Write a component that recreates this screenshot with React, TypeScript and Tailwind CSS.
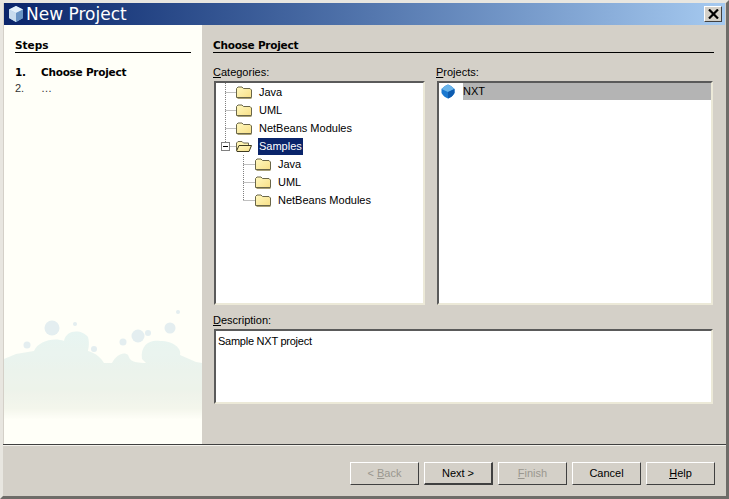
const font = { fontFamily: '"Liberation Sans", sans-serif' };
const boldFont = { fontFamily: '"DejaVu Sans", sans-serif' };

function Folder({ open = false }: { open?: boolean }) {
  return (
    <svg width="16" height="14" viewBox="0 0 16 14" className="shrink-0">
      <defs>
        <linearGradient id="fg" x1="0" y1="0" x2="1" y2="1">
          <stop offset="0" stopColor="#fff8c0" />
          <stop offset="1" stopColor="#f8e088" />
        </linearGradient>
      </defs>
      {open ? (
        <>
          <path d="M0.5 11 V4 L2 2.5 H6 L7.5 4 H12.5 V6" fill="#fff4b0" stroke="#6e6a50" />
          <path d="M0.5 12 L3 6.5 H15.5 L13 12.5 H1 Z" fill="url(#fg)" stroke="#3e3a20" />
        </>
      ) : (
        <>
          <path d="M0.5 12.5 V3.5 L2 2 H6 L7.5 3.5 H14 L15.5 5 V12.5 Z" fill="url(#fg)" stroke="#6a6648" />
          <path d="M1.5 13.5 H15.5" fill="none" stroke="#a8a078" />
        </>
      )}
    </svg>
  );
}

function Connector({ kind, width }: { kind: "mid" | "exp" | "child" | "childLast"; width: number }) {
  const x = 5.5;
  return (
    <svg width={width} height="18" className="shrink-0">
      <g stroke="#808080" strokeDasharray="1 1" fill="none">
        {kind === "mid" && <path d={`M${x} 0 V18`} />}
        {kind === "exp" && <path d={`M${x} 0 V5`} />}
        {kind === "childLast" ? <path d={`M${x} 0 V9`} /> : kind === "child" ? <path d={`M${x} 0 V18`} /> : null}
        <path d={`M${x} 9.5 H${width}`} />
      </g>
      {kind === "exp" && (
        <g>
          <rect x="1.5" y="5.5" width="8" height="8" fill="#fff" stroke="#808080" />
          <path d="M3 9.5 H8" stroke="#000" />
        </g>
      )}
    </svg>
  );
}

function Row({ kind, label, indent, open, selected }: { kind: "mid" | "exp" | "child" | "childLast"; label: string; indent?: boolean; open?: boolean; selected?: boolean }) {
  return (
    <div className={`flex items-center h-[18px] ${indent ? "pl-[22px]" : "pl-[4px]"}`}>
      <Connector kind={kind} width={indent ? 17 : 16} />
      <Folder open={open} />
      <span className={`ml-[6px] px-[1px] h-[17px] leading-[16px] whitespace-nowrap ${selected ? "bg-[#0a246a] text-white" : ""}`}>{label}</span>
    </div>
  );
}

function Btn({ label, u, rest, pre, disabled, def }: { label?: string; u?: string; rest?: string; pre?: string; disabled?: boolean; def?: boolean }) {
  return (
    <div
      className={`w-[69px] h-[23px] flex items-center justify-center border-t border-l border-t-white border-l-white border-r border-b ${def ? "border-t-[#404040] border-l-[#404040] border-r-2 border-b-2 border-r-[#404040] border-b-[#404040]" : "border-r-[#404040] border-b-[#404040]"} ${disabled ? "text-[#9a978f]" : "text-black"}`}
    >
      <span>
        {pre}
        {u && <span className="underline">{u}</span>}
        {rest}
        {label}
      </span>
    </div>
  );
}

const sunken = "bg-white border-2 border-t-[#5a5a5a] border-l-[#5a5a5a] border-r-[#ece9d8] border-b-[#ece9d8]";

export default function App() {
  return (
    <div style={font} className="w-[729px] h-[499px] bg-[#d4d0c8] text-[11px] text-black flex flex-col border-t-[3px] border-l-[3px] border-r-[3px] border-b-[3px] border-t-[#e8e6e0] border-l-[#e8e6e0] border-r-[#6e6c68] border-b-[#6e6c68] overflow-hidden">
      <div className="h-[22px] ml-[1px] mr-[1px] bg-gradient-to-r from-[#0a246a] to-[#a6caf0] flex items-center shrink-0">
        <svg width="18" height="18" viewBox="0 0 18 18" className="ml-[3px] shrink-0">
          <path d="M9 1 L16 4.5 V13 L9 17 L2 13 V4.5 Z" fill="#9ec4e8" />
          <path d="M9 1 L16 4.5 L9 8 L2 4.5 Z" fill="#e4f0fa" />
          <path d="M9 8 V17 L2 13 V4.5 Z" fill="#c8dcee" />
          <path d="M9 8 V17 L16 13 V4.5 Z" fill="#6a94c4" />
        </svg>
        <span style={boldFont} className="ml-[1px] text-white text-[17px] leading-[22px]">New Project</span>
        <div className="ml-auto mr-[3px] w-[18px] h-[16px] bg-[#d4d0c8] border border-t-white border-l-white border-r-[#404040] border-b-[#404040] flex items-center justify-center">
          <svg width="11" height="10" viewBox="0 0 11 10">
            <path d="M1 0.5 L10 9.5 M10 0.5 L1 9.5" stroke="#000" strokeWidth="2.2" />
          </svg>
        </div>
      </div>

      <div className="flex h-[419px] ml-[1px] mr-[1px] shrink-0">
        <div className="w-[198px] bg-[#fffff8] shrink-0 flex flex-col relative">
          <div style={boldFont} className="ml-[11px] mr-[11px] mt-[13px] h-[14px] border-b border-black font-bold text-[10.5px] leading-[14px] box-content">Steps</div>
          <div style={boldFont} className="ml-[11px] mt-[11px] flex font-bold text-[10.5px] h-[16px] leading-[17px] tracking-[-0.25px]">
            <span className="w-[26px]">1.</span>
            <span>Choose Project</span>
          </div>
          <div className="ml-[11px] flex h-[16px] leading-[16px] text-[#333]">
            <span className="w-[26px]">2.</span>
            <span>…</span>
          </div>
          <svg className="absolute left-0 bottom-[5px] opacity-75" width="198" height="130" viewBox="0 0 198 130">
            <defs>
              <linearGradient id="m" x1="0" y1="0" x2="0" y2="1">
                <stop offset="0" stopColor="#e0f2f0" />
                <stop offset="0.6" stopColor="#e8efe6" />
                <stop offset="0.8" stopColor="#f0f3e8" />
                <stop offset="0.92" stopColor="#fffff8" />
              </linearGradient>
            </defs>
            <g fill="#dbe9ee">
              <circle cx="48" cy="19" r="7.5" />
              <circle cx="73" cy="29" r="6" />
              <circle cx="134" cy="27" r="6.5" />
              <circle cx="166" cy="19" r="5.5" />
              <circle cx="174" cy="3" r="2" />
              <circle cx="71" cy="15" r="2" />
              <circle cx="144" cy="24" r="3" />
              <circle cx="119" cy="33" r="3.5" />
              <circle cx="23" cy="36" r="3.5" />
              <circle cx="90" cy="40" r="3" />
            </g>
            <path
              d="M0 50 L12 45 L30 42 C34 32 50 28 60 32 C62 20 78 20 84 28 C86 36 84 40 84 42 C92 44 98 50 100 54 L108 54 C112 46 120 42 124 46 C126 50 126 54 142 54 L138 50 C136 36 146 30 156 32 C170 32 178 40 176 46 L192 53 L198 54 V118 H0 Z"
              fill="url(#m)"
            />
          </svg>
        </div>

        <div className="flex-1 flex flex-col pl-[11px] pr-[11px] pt-[13px]">
          <div style={boldFont} className="h-[14px] border-b border-black font-bold text-[10.5px] leading-[14px] box-content tracking-[-0.25px]">Choose Project</div>
          <div className="pl-[1px] pr-[1px] flex flex-col">
            <div className="flex gap-[12px] mt-[11px]">
              <div className="w-[211px] flex flex-col">
                <div className="h-[17px] leading-[16px] -ml-[1px]"><span className="underline">C</span>ategories:</div>
                <div className={`${sunken} h-[224px]`}>
                  <Row kind="mid" label="Java" />
                  <Row kind="mid" label="UML" />
                  <Row kind="mid" label="NetBeans Modules" />
                  <Row kind="exp" label="Samples" open selected />
                  <Row kind="child" label="Java" indent />
                  <Row kind="child" label="UML" indent />
                  <Row kind="childLast" label="NetBeans Modules" indent />
                </div>
              </div>
              <div className="flex-1 flex flex-col">
                <div className="h-[17px] leading-[16px] -ml-[1px]"><span className="underline">P</span>rojects:</div>
                <div className={`${sunken} h-[224px]`}>
                  <div className="flex items-center h-[17px]">
                    <svg width="24" height="17" viewBox="1 0 24 17" className="shrink-0">
                      <path d="M3.5 6 L7 3 L10 1.5 L13 3 L16.5 6 V10 C15 13 12 15 10 15.5 C8 15 5 13 3.5 10 Z" fill="#1a78d0" />
                      <path d="M3.5 6 L7 3 L10 1.5 L13 3 L16.5 6 L10 9 Z" fill="#6ab4ea" />
                      <path d="M10 9 V15.5 C12 15 15 13 16.5 10 V6 Z" fill="#0e5cb0" />
                    </svg>
                    <div className="flex-1 h-[17px] bg-[#b4b4b4] leading-[16px]">NXT</div>
                  </div>
                </div>
              </div>
            </div>
            <div className="mt-[7px] h-[17px] leading-[16px] -ml-[1px]"><span className="underline">D</span>escription:</div>
            <div className={`${sunken} h-[75px] pl-[2px] pt-[2px] leading-[16px] tracking-[-0.25px]`}>Sample NXT project</div>
          </div>
        </div>
      </div>

      <div className="h-[2px] border-t border-t-[#404040] border-b border-b-[#f4f2ec] shrink-0" />
      <div className="flex-1 flex justify-end items-start gap-[5px] pt-[16px] pr-[11px]">
        <Btn pre="< " u="B" rest="ack" disabled />
        <Btn label="Next >" def />
        <Btn u="F" rest="inish" disabled />
        <Btn label="Cancel" />
        <Btn u="H" rest="elp" />
      </div>
    </div>
  );
}
